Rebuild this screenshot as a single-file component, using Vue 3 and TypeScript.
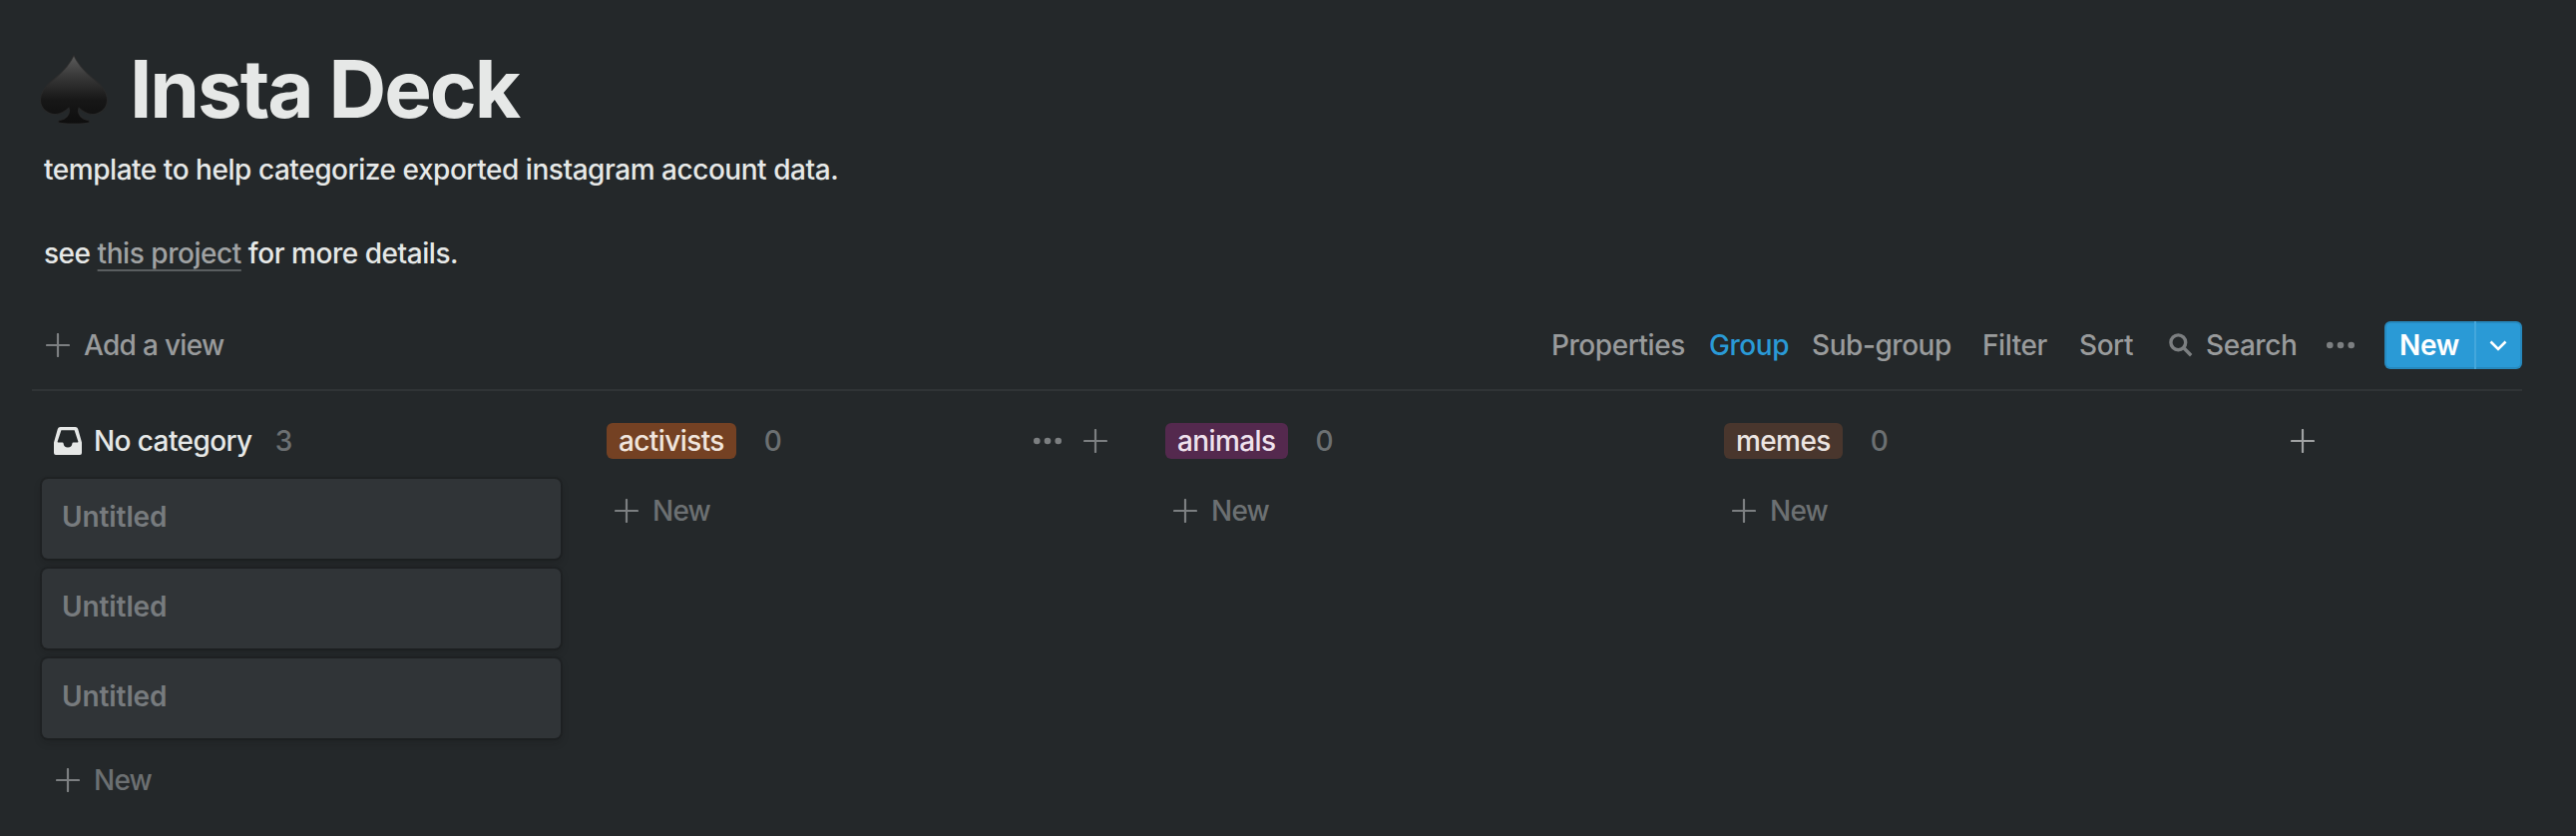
<script setup lang="ts">
interface Group {
  name: string
  tone: 'none' | 'orange' | 'purple' | 'brown'
  count: number
  cards: string[]
  actions?: boolean
}

interface Tool {
  id: string
  label: string
  active?: boolean
}

const groups: Group[] = [
  { name: 'No category', tone: 'none', count: 3, cards: ['Untitled', 'Untitled', 'Untitled'] },
  { name: 'activists', tone: 'orange', count: 0, cards: [], actions: true },
  { name: 'animals', tone: 'purple', count: 0, cards: [] },
  { name: 'memes', tone: 'brown', count: 0, cards: [] },
]

const tools: Tool[] = [
  { id: 'properties', label: 'Properties' },
  { id: 'group', label: 'Group', active: true },
  { id: 'sub-group', label: 'Sub-group' },
  { id: 'filter', label: 'Filter' },
  { id: 'sort', label: 'Sort' },
]
</script>

<template>
  <main class="page">
    <header class="heading">
      <svg class="spade" viewBox="0 0 70 71" aria-hidden="true">
        <defs>
          <linearGradient id="spade-fill" x1="0" y1="0" x2="0" y2="1">
            <stop offset="0" stop-color="#5c5c5c" />
            <stop offset="0.3" stop-color="#393939" />
            <stop offset="0.65" stop-color="#171717" />
            <stop offset="1" stop-color="#0e0e0e" />
          </linearGradient>
        </defs>
        <path
          d="M35 1.5C38 8 44 16 53 23.500C63 31.500 68.500 38 68.500 46.500C68.500 55 61 60.500 53.500 60.500C47 60.500 43 57 40 54.200C38.800 57 39.500 62 44.500 65C48 66.800 51 66.500 51 68C51 69.500 43 70 35 70C27 70 19 69.500 19 68C19 66.500 22 66.800 25.500 65C30.500 62 31.200 57 30 54.200C27 57 23 60.500 16.500 60.500C9 60.500 1.500 55 1.500 46.500C1.500 38 7 31.500 17 23.500C26 16 32 8 35 1.500Z"
          fill="url(#spade-fill)"
          stroke="#2b2b2b"
          stroke-width="1.2"
          stroke-opacity="0.7"
        />
      </svg>
      <h1 class="title">Insta Deck</h1>
    </header>

    <section class="description">
      <p>template to help categorize exported instagram account data.</p>
      <p class="blank"></p>
      <p>see <a class="link">this project</a> for more details.</p>
    </section>

    <nav class="toolbar">
      <button class="add-view">
        <svg class="plus" viewBox="0 0 24 24"><path d="M12 1v22M1 12h22" /></svg>
        <span>Add a view</span>
      </button>

      <div class="tools">
        <button v-for="tool in tools" :key="tool.id" class="tool" :class="[tool.id, { active: tool.active }]">
          {{ tool.label }}
        </button>
        <button class="tool search">
          <svg class="magnifier" viewBox="0 0 24 24">
            <circle cx="9.300" cy="9.300" r="7.400" />
            <path d="M14.800 14.800l7.400 7.400" />
          </svg>
          <span>Search</span>
        </button>
        <button class="tool more" aria-label="More">
          <svg class="dots" viewBox="0 0 28 8">
            <circle cx="3.300" cy="4" r="3.300" />
            <circle cx="14" cy="4" r="3.300" />
            <circle cx="24.700" cy="4" r="3.300" />
          </svg>
        </button>
        <div class="create">
          <button class="create-main">New</button>
          <button class="create-menu" aria-label="Templates">
            <svg class="chevron" viewBox="0 0 18 11"><path d="M1.500 1.500L9 9l7.500-7.500" /></svg>
          </button>
        </div>
      </div>
    </nav>

    <section class="board">
      <article v-for="group in groups" :key="group.name" class="column">
        <header class="column-head">
          <span v-if="group.tone === 'none'" class="uncategorized">
            <svg class="inbox" viewBox="0 0 28 28">
              <path
                fill-rule="evenodd"
                d="M6.500 0H21.500Q23.600 0 24.200 1.900L28 15.500V26Q28 28 26 28H2Q0 28 0 26V15.500L3.800 1.900Q4.400 0 6.500 0ZM7.400 3.200L3.600 14.700Q3.600 15.400 4.200 15.400H8.500Q9.600 15.400 9.600 16.600Q10 20.600 14 20.600Q18 20.600 18.400 16.600Q18.400 15.400 19.500 15.400H23.800Q24.400 15.400 24.400 14.700L20.600 3.200Z"
              />
            </svg>
            {{ group.name }}
          </span>
          <span v-else class="tag" :class="group.tone">{{ group.name }}</span>
          <span class="count">{{ group.count }}</span>
          <span v-if="group.actions" class="head-actions">
            <svg class="dots" viewBox="0 0 28 8">
              <circle cx="3.300" cy="4" r="3.300" />
              <circle cx="14" cy="4" r="3.300" />
              <circle cx="24.700" cy="4" r="3.300" />
            </svg>
            <svg class="plus" viewBox="0 0 24 24"><path d="M12 1v22M1 12h22" /></svg>
          </span>
        </header>
        <div v-for="(card, i) in group.cards" :key="i" class="card">{{ card }}</div>
        <button class="new-card">
          <svg class="plus" viewBox="0 0 24 24"><path d="M12 1v22M1 12h22" /></svg>
          <span>New</span>
        </button>
      </article>
      <button class="add-group" aria-label="Add a group">
        <svg class="plus" viewBox="0 0 24 24"><path d="M12 1v22M1 12h22" /></svg>
      </button>
    </section>
  </main>
</template>

<style>
body {
  background: #24282a;
}
</style>

<style scoped>
.page {
  box-sizing: border-box;
  width: 2582px;
  height: 838px;
  padding: 41px 54px 0 32px;
  overflow: hidden;
  background: #24282a;
  color: #e6e8e7;
  font-family: Inter, "Liberation Sans", sans-serif;
  font-size: 28px;
  font-weight: 450;
  line-height: 42px;
}

button {
  display: flex;
  align-items: center;
  margin: 0;
  padding: 0;
  border: 0;
  background: none;
  color: inherit;
  font: inherit;
  letter-spacing: inherit;
  white-space: nowrap;
}

svg {
  display: block;
  flex: none;
}

.plus {
  width: 24px;
  height: 24px;
  fill: none;
  stroke: currentColor;
  stroke-width: 2.2;
  stroke-linecap: round;
}

.dots {
  width: 28px;
  height: 8px;
  fill: currentColor;
}

.heading {
  display: flex;
  height: 96px;
}

.spade {
  width: 70px;
  height: 71px;
  margin: 13px 0 0 7px;
}

.title {
  margin: 0 0 0 21px;
  font-size: 80px;
  font-weight: 700;
  line-height: 96px;
  letter-spacing: -2.1px;
}

.description {
  margin-top: 12px;
  padding-left: 12px;
  letter-spacing: -0.46px;
}

.description p {
  margin: 0;
}

.description .blank {
  height: 42px;
}

.link {
  color: #a0a2a3;
  text-decoration: underline;
  text-decoration-color: #5a5e60;
  text-decoration-thickness: 2px;
  text-underline-offset: 6px;
  text-decoration-skip-ink: none;
}

.toolbar {
  display: flex;
  justify-content: space-between;
  align-items: center;
  height: 88px;
  margin-top: 27px;
  border-bottom: 2px solid #303436;
  color: #999b9c;
}

.add-view {
  margin-left: 14px;
  gap: 14px;
  letter-spacing: -0.7px;
}

.add-view .plus {
  color: #7c7f81;
}

.tools {
  display: flex;
  align-items: center;
  letter-spacing: -0.45px;
}

.tool {
  flex: none;
}

.properties {
  width: 158px;
}

.group {
  width: 103px;
}

.sub-group {
  width: 171px;
}

.filter {
  width: 97px;
}

.sort {
  width: 90px;
}

.active {
  color: #2a9ad6;
}

.search {
  width: 158px;
  gap: 13px;
}

.magnifier {
  width: 24px;
  height: 24px;
  fill: none;
  stroke: #7c7f81;
  stroke-width: 3.4;
}

.more {
  width: 58px;
  color: #7c7f81;
}

.create {
  box-sizing: border-box;
  display: flex;
  width: 138px;
  height: 48px;
  border-radius: 6px;
  background: #2a9ad6;
  box-shadow: inset 0 0 0 2px rgba(15, 15, 15, 0.12);
  color: #fff;
}

.create-main {
  justify-content: center;
  width: 90px;
  font-weight: 600;
  letter-spacing: -0.3px;
}

.create-menu {
  justify-content: center;
  flex: 1;
  padding-right: 2px;
  border-left: 2px solid #44a7dc;
}

.chevron {
  width: 18px;
  height: 11px;
  fill: none;
  stroke: currentColor;
  stroke-width: 2.6;
}

.board {
  display: flex;
  gap: 40px;
  padding: 12px 0 0 10px;
}

.column {
  display: flex;
  flex: none;
  flex-direction: column;
  width: 520px;
}

.column-head {
  display: flex;
  align-items: center;
  height: 76px;
  padding: 0 12px 0 6px;
}

.uncategorized {
  display: flex;
  align-items: center;
  gap: 12px;
  padding-left: 6px;
  margin-right: -5px;
  letter-spacing: -0.6px;
}

.inbox {
  width: 28px;
  height: 28px;
  fill: #e6e8e7;
}

.tag {
  padding: 0 12px;
  border-radius: 6px;
  line-height: 36px;
  letter-spacing: -0.6px;
}

.orange {
  background: #744123;
  color: #f0e5dd;
}

.purple {
  background: #54294e;
  color: #eee1ec;
}

.brown {
  background: #49362d;
  color: #ebe4e1;
}

.count {
  margin-left: 28px;
  color: #6c7072;
}

.head-actions {
  display: flex;
  align-items: center;
  gap: 22px;
  margin-left: auto;
  color: #7c7f81;
}

.card {
  box-sizing: border-box;
  height: 80px;
  margin-bottom: 10px;
  padding: 17px 20px;
  border-radius: 6px;
  background: #303437;
  box-shadow: 0 0 0 2px rgba(15, 15, 15, 0.2), 0 4px 8px rgba(15, 15, 15, 0.2);
  color: #777b7e;
  font-weight: 600;
  letter-spacing: -0.1px;
}

.new-card {
  height: 64px;
  padding-left: 14px;
  gap: 14px;
  color: #6c7072;
  letter-spacing: -0.8px;
}

.new-card .plus {
  color: #7c7f81;
}

.add-group {
  align-self: flex-start;
  height: 76px;
  margin-left: 14px;
  color: #a0a2a3;
}
</style>
